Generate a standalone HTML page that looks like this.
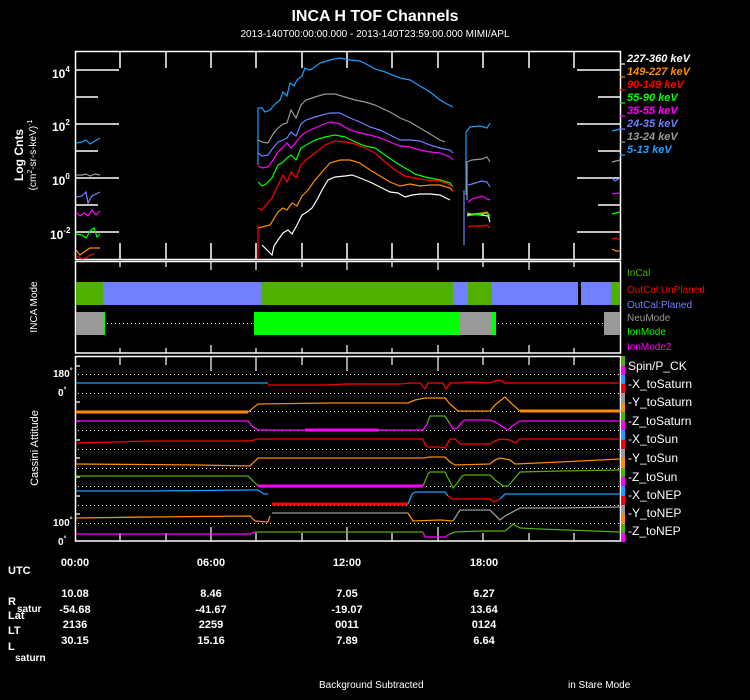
<!DOCTYPE html>
<html><head><meta charset="utf-8"><style>
html,body{margin:0;padding:0;background:#000;}
svg{display:block;font-family:"Liberation Sans",sans-serif;}
</style></head><body>
<svg width="750" height="700" viewBox="0 0 750 700" xmlns="http://www.w3.org/2000/svg">
<rect width="750" height="700" fill="#000"/>
<text x="375" y="21" fill="#fff" font-size="16" font-weight="bold" text-anchor="middle">INCA H TOF Channels</text>
<text x="375" y="37" fill="#fff" font-size="10" text-anchor="middle">2013-140T00:00:00.000 - 2013-140T23:59:00.000 MIMI/APL</text>

<!-- Panel 1 -->
<g stroke="#fff" stroke-width="1.5" fill="none">
<rect x="75.5" y="51.5" width="545" height="208"/>
<path d="M120,52v16 M166,52v16 M211,52v16 M256,52v16 M302,52v16 M347,52v16 M392,52v16 M438,52v16 M483,52v16 M529,52v16 M574,52v16
M120,259v-16 M166,259v-16 M211,259v-16 M256,259v-16 M302,259v-16 M347,259v-16 M392,259v-16 M438,259v-16 M483,259v-16 M529,259v-16 M574,259v-16
M76,70h43 M76,97h22 M76,124h43 M76,151h22 M76,178h43 M76,205h22 M76,232h43
M620,70h-43 M620,97h-22 M620,124h-43 M620,151h-22 M620,178h-43 M620,205h-22 M620,232h-43"/>
</g>
<g font-size="12" fill="#fff" font-weight="bold">
<text x="52" y="78">10<tspan font-size="8" dy="-6">4</tspan></text>
<text x="52" y="131">10<tspan font-size="8" dy="-6">2</tspan></text>
<text x="52" y="185">10<tspan font-size="8" dy="-6">0</tspan></text>
<text x="50" y="239">10<tspan font-size="8" dy="-6">-2</tspan></text>
</g>
<text transform="translate(23,155) rotate(-90)" fill="#fff" font-size="12" font-weight="bold" text-anchor="middle">Log Cnts</text>
<text transform="translate(36,155) rotate(-90)" fill="#fff" font-size="10" text-anchor="middle">(cm<tspan font-size="7" dy="-4">2</tspan><tspan dy="4">-sr-s-keV)</tspan><tspan font-size="7" dy="-4">-1</tspan></text>

<g fill="none" stroke-width="1.2">
<!-- left segments -->
<polyline stroke="#1ea0ff" points="76,143 82,142 86,140 90,144 95,141 100,138"/>
<polyline stroke="#999" points="76,175 82,175 86,174 90,176 95,174 100,175"/>
<polyline stroke="#7080ff" points="76,197 82,196 86,192 88,203 92,196 96,194 100,192"/>
<polyline stroke="#f0f" points="76,212 80,216 84,213 88,216 92,210 96,215 100,211"/>
<polyline stroke="#0f0" points="76,234 82,235 86,238 90,231 94,228 97,237 100,234"/>
<polyline stroke="#ff8c00" points="76,250 80,255 84,252 90,248 100,248"/>
<polyline stroke="#f00" points="77,256 82,259 86,258 90,255 94,254"/>
<!-- main -->
<polyline stroke="#1ea0ff" points="258,165 258,108 262,108 265,112 270,110 275,104 280,100 283,92 287,96 290,83 294,86 297,80 302,76 305,68 309,70 312,69 320,63 330,60 340,58 350,60 360,61 370,66 375,69 385,72 400,78 410,80 420,86 430,92 440,100 447,104 453,107"/>
<polyline stroke="#999" points="258,140 262,142 268,143 273,134 278,128 283,124 287,123 291,110 296,118 301,105 306,100 315,97 325,94 335,94 345,97 355,100 365,102 375,105 390,112 400,118 410,122 420,128 430,134 440,140 445,142"/>
<polyline stroke="#7080ff" points="258,153 262,156 268,155 273,148 278,142 283,140 287,138 291,132 296,136 301,124 306,120 315,117 322,115 330,113 340,113 350,118 360,122 370,127 380,130 390,135 400,140 410,140 420,141 430,145 440,148 450,150 453,153"/>
<polyline stroke="#f0f" points="258,166 262,168 268,167 273,160 278,152 283,147 287,143 291,148 296,142 301,136 306,132 315,128 322,125 330,122 340,124 350,130 360,133 370,135 380,138 390,142 400,146 410,147 420,150 430,152 440,153 450,157 453,160"/>
<polyline stroke="#0f0" points="258,182 262,186 266,184 272,178 278,165 283,162 287,158 291,155 296,160 301,148 306,145 315,140 325,137 335,135 345,137 355,142 365,146 375,148 385,155 395,162 405,168 415,174 425,177 440,180 450,183 453,187"/>
<polyline stroke="#f00" points="258,208 262,210 266,205 272,198 278,185 283,175 287,182 291,172 296,178 301,165 306,160 315,153 325,145 335,141 345,142 355,144 365,148 375,153 385,162 395,170 405,176 415,178 425,180 440,181 450,185 453,187"/>
<polyline stroke="#ff8c00" points="258,228 262,227 270,225 278,212 283,208 287,210 292,203 297,206 302,196 308,190 315,180 322,172 330,163 340,160 350,160 360,163 370,170 380,176 390,182 400,186 410,184 420,186 430,185 440,185 450,188 453,191"/>
<polyline stroke="#fff" points="262,245 267,250 272,255 274,246 278,240 283,233 288,230 292,234 297,225 302,215 307,212 312,208 318,198 322,190 328,180 335,177 345,176 352,175 360,178 370,182 380,187 390,192 398,193 405,197 412,195 420,194 430,194 440,195 450,200"/>
<polyline stroke="#f00" points="258,259 258,225"/>
<!-- right segment -->
<polyline stroke="#7080ff" points="464,245 464,190"/>
<polyline stroke="#1ea0ff" points="466,195 466,132 470,127 480,126 487,128 490,123"/>
<polyline stroke="#999" points="467,200 467,162 472,160 482,159 487,157 490,162"/>
<polyline stroke="#7080ff" points="468,185 472,184 482,181 487,182 490,187"/>
<polyline stroke="#f0f" points="468,202 472,199 482,196 487,199 490,200"/>
<polyline stroke="#fff" points="467,215 472,214 482,215 488,216 490,222"/>
<polyline stroke="#ff8c00" points="467,213 472,214 482,213 487,212 490,216"/>
<polyline stroke="#0f0" points="467,216 472,215 482,214 487,213 490,218"/>
<polyline stroke="#f00" points="468,227 472,226 482,226 487,225 490,228"/>
<!-- right edge -->
<polyline stroke="#1ea0ff" points="612,131 616,130 620,129"/>
<polyline stroke="#999" points="612,162 620,160"/>
<polyline stroke="#7080ff" points="612,178 615,181 620,178"/>
<polyline stroke="#f0f" points="612,194 620,193"/>
<polyline stroke="#0f0" points="612,214 620,212"/>
<polyline stroke="#f00" points="612,239 616,238 620,240"/>
<polyline stroke="#ff8c00" points="612,249 616,251 620,251"/>
</g>
<!-- legend 1 -->
<g font-size="11" font-weight="bold" font-style="italic">
<text x="627" y="62" fill="#fff">227-360 keV</text>
<text x="627" y="75" fill="#ff8c00">149-227 keV</text>
<text x="627" y="88" fill="#f00">90-149 keV</text>
<text x="627" y="101" fill="#0f0">55-90 keV</text>
<text x="627" y="114" fill="#f0f">35-55 keV</text>
<text x="627" y="127" fill="#7080ff">24-35 keV</text>
<text x="627" y="140" fill="#999">13-24 keV</text>
<text x="627" y="153" fill="#1ea0ff">5-13 keV</text>
</g>
<g stroke-width="1.2">
<path d="M620,64h5" stroke="#fff"/><path d="M620,77h5" stroke="#ff8c00"/><path d="M620,90h5" stroke="#f00"/><path d="M620,103h5" stroke="#0f0"/><path d="M620,116h5" stroke="#f0f"/><path d="M620,129h5" stroke="#7080ff"/><path d="M620,142h5" stroke="#999"/><path d="M620,155h5" stroke="#1ea0ff"/>
</g>

<!-- Panel 2 -->
<rect x="75.5" y="261.5" width="545" height="91.5" fill="none" stroke="#fff" stroke-width="1.5"/>
<path d="M120,262v5 M166,262v5 M211,262v8 M256,262v8 M302,262v5 M347,262v8 M392,262v5 M438,262v8 M483,262v5 M529,262v8 M574,262v5 M120,353v-5 M166,353v-5 M211,353v-8 M256,353v-5 M302,353v-5 M347,353v-8 M392,353v-5 M438,353v-8 M483,353v-5 M529,353v-8 M574,353v-5" stroke="#fff" stroke-width="1.2"/>
<g>
<rect x="76" y="282" width="28" height="23" fill="#50b000"/>
<rect x="103" y="282" width="158" height="23" fill="#7080ff"/>
<rect x="261" y="282" width="192" height="23" fill="#50b000"/>
<rect x="453" y="282" width="15" height="23" fill="#7080ff"/>
<rect x="468" y="282" width="24" height="23" fill="#50b000"/>
<rect x="492" y="282" width="86" height="23" fill="#7080ff"/>
<rect x="581" y="282" width="31" height="23" fill="#7080ff"/>
<rect x="611" y="282" width="9" height="23" fill="#50b000"/>
<rect x="76" y="312" width="27" height="23" fill="#999"/>
<rect x="103" y="312" width="2" height="23" fill="#0f0"/>
<rect x="254" y="312" width="203" height="23" fill="#0f0"/>
<rect x="457" y="312" width="3" height="23" fill="#0f0"/>
<rect x="460" y="312" width="32" height="23" fill="#999"/>
<rect x="492" y="312" width="4" height="23" fill="#0f0"/>
<rect x="604" y="312" width="16" height="23" fill="#999"/>
<path d="M107,323.5H253 M498,323.5H603" stroke="#fff" stroke-width="1" stroke-dasharray="1,3"/>
</g>
<text transform="translate(37,307) rotate(-90)" fill="#fff" font-size="10" text-anchor="middle">INCA Mode</text>
<g font-size="10">
<text x="627" y="276" fill="#50b000">InCal</text>
<text x="627" y="293" fill="#f00">OutCal:UnPlaned</text>
<text x="627" y="308" fill="#7080ff">OutCal:Planed</text>
<text x="627" y="321" fill="#999">NeuMode</text>
<text x="627" y="335" fill="#0f0">IonMode</text>
<text x="627" y="350" fill="#f0f">IonMode2</text>
</g>

<!-- Panel 3 -->
<rect x="75.5" y="356.5" width="545" height="184.5" fill="none" stroke="#fff" stroke-width="1.5"/>
<path d="M120,357v8 M166,357v8 M211,357v14 M256,357v14 M302,357v8 M347,357v14 M392,357v8 M438,357v14 M483,357v8 M529,357v8 M574,357v8 M120,541v-8 M166,541v-8 M211,541v-14 M256,541v-8 M302,541v-8 M347,541v-14 M392,541v-8 M438,541v-14 M483,541v-8 M529,541v-8 M574,541v-8
M76,366h4 M76,402h4 M76,421h4 M76,440h4 M76,458h4 M76,477h4 M76,496h4 M76,514h4" stroke="#fff" stroke-width="1.2"/>
<path d="M78,374.5H620 M78,393.5H620 M78,411.5H620 M78,430.5H620 M78,449.5H620 M78,468.5H620 M78,486.5H620 M78,505.5H620 M78,523.5H620" stroke="#fff" stroke-width="1" stroke-dasharray="1,3"/>
<g font-size="10" fill="#fff" font-weight="bold">
<text x="53" y="377">180<tspan font-size="7" dy="-4">°</tspan></text>
<text x="58" y="396">0<tspan font-size="7" dy="-4">°</tspan></text>
<text x="53" y="526">100<tspan font-size="7" dy="-4">°</tspan></text>
<text x="58" y="545">0<tspan font-size="7" dy="-4">°</tspan></text>
</g>
<text transform="translate(38,448) rotate(-90)" fill="#fff" font-size="11" text-anchor="middle">Cassini Attitude</text>
<g fill="none" stroke-width="1.3">
<polyline stroke="#1ea0ff" points="76,383 250,383 258,383 268,383"/>
<polyline stroke="#f00" points="268,385 325,385 345,384 400,384 410,383 420,383 425,389 428,383 443,383 446,389 450,383 460,383 470,382 490,383 495,381 500,380 505,383 620,383"/>
<polyline stroke="#ff8c00" stroke-width="3" points="76,412 248,412"/>
<polyline stroke="#ff8c00" points="248,412 258,404 330,403 408,403 415,400 425,398 445,398 450,404 458,411 490,411 495,405 505,397 512,404 520,411"/>
<polyline stroke="#ff8c00" stroke-width="3" points="520,411 620,411"/>
<polyline stroke="#f0f" points="76,421 248,421 252,426 258,430 300,430 423,430 427,424"/>
<polyline stroke="#f0f" stroke-width="3" points="305,430 378,430"/>
<polyline stroke="#50b000" points="427,424 430,416 445,416 450,424"/>
<polyline stroke="#f0f" points="450,424 453,429 457,428 462,422 465,420 490,420 495,422 503,427 508,430 512,426 520,421 620,421"/>
<polyline stroke="#f00" points="76,443 150,441 250,441 258,439 320,439 423,439 425,445 428,447 440,447 445,448 450,439 455,439 460,444 490,444 495,441 500,439 510,440 515,443 520,439 620,439"/>
<polyline stroke="#ff8c00" points="76,464 200,465 250,466 258,458 330,458 423,458 430,457 445,457 450,462 455,465 490,464 495,460 500,458 510,460 515,464 560,462 620,459"/>
<polyline stroke="#50b000" points="76,476 248,476 252,480 258,486"/>
<polyline stroke="#f0f" stroke-width="3" points="258,486 423,486"/>
<polyline stroke="#50b000" points="423,486 428,474 430,472 445,472 450,482 453,488 458,482 462,476 465,475 490,475 495,480 503,486 508,486 515,478 520,472 560,471 620,470"/>
<polyline stroke="#1ea0ff" points="76,491 150,491 250,490 258,490 264,494 268,494"/>
<polyline stroke="#f00" stroke-width="3" points="272,504 408,504"/>
<polyline stroke="#1ea0ff" points="408,504 412,494 415,492 445,492 448,496"/>
<polyline stroke="#f00" points="448,496 452,499 490,499 494,502 500,499"/>
<polyline stroke="#1ea0ff" points="500,499 505,494 520,494 620,494"/>
<polyline stroke="#ff8c00" points="76,518 150,517 250,516 255,521 268,522 270,516"/>
<polyline stroke="#999" points="272,513 408,513"/>
<polyline stroke="#ff8c00" points="408,513 413,521 440,520 453,521"/>
<polyline stroke="#999" points="453,521 460,510 490,510 495,515 500,520 505,516 520,508 560,508 620,507"/>
<polyline stroke="#f0f" points="76,534 250,534 255,532"/>
<polyline stroke="#50b000" points="255,532 423,532"/>
<polyline stroke="#f0f" points="423,532 425,537 445,537 450,534"/>
<polyline stroke="#50b000" points="450,534 455,532 480,531 505,531 510,527 513,524 520,528 540,529 620,532"/>
</g>
<!-- color bar -->
<g>
<rect x="621" y="356" width="4" height="10" fill="#50b000"/>
<rect x="621" y="366" width="4" height="9" fill="#f0f"/>
<rect x="621" y="375" width="4" height="9" fill="#1ea0ff"/>
<rect x="621" y="384" width="4" height="9" fill="#f00"/>
<rect x="621" y="393" width="4" height="10" fill="#999"/>
<rect x="621" y="403" width="4" height="9" fill="#ff8c00"/>
<rect x="621" y="412" width="4" height="9" fill="#50b000"/>
<rect x="621" y="421" width="4" height="9" fill="#f0f"/>
<rect x="621" y="430" width="4" height="10" fill="#1ea0ff"/>
<rect x="621" y="440" width="4" height="9" fill="#f00"/>
<rect x="621" y="449" width="4" height="9" fill="#999"/>
<rect x="621" y="458" width="4" height="10" fill="#ff8c00"/>
<rect x="621" y="468" width="4" height="9" fill="#50b000"/>
<rect x="621" y="477" width="4" height="9" fill="#f0f"/>
<rect x="621" y="486" width="4" height="10" fill="#1ea0ff"/>
<rect x="621" y="496" width="4" height="9" fill="#f00"/>
<rect x="621" y="505" width="4" height="9" fill="#999"/>
<rect x="621" y="514" width="4" height="10" fill="#ff8c00"/>
<rect x="621" y="524" width="4" height="9" fill="#50b000"/>
<rect x="621" y="533" width="4" height="9" fill="#f0f"/>
</g>
<g font-size="12" fill="#fff">
<text x="628" y="370">Spin/P_CK</text>
<text x="628" y="388">-X_toSaturn</text>
<text x="628" y="406">-Y_toSaturn</text>
<text x="628" y="425">-Z_toSaturn</text>
<text x="628" y="443">-X_toSun</text>
<text x="628" y="462">-Y_toSun</text>
<text x="628" y="481">-Z_toSun</text>
<text x="628" y="499">-X_toNEP</text>
<text x="628" y="517">-Y_toNEP</text>
<text x="628" y="535">-Z_toNEP</text>
</g>

<!-- bottom table -->
<g font-size="11" fill="#fff" font-weight="bold">
<text x="8" y="574">UTC</text>
<text x="8" y="605">R</text><text x="17" y="612" font-size="10">satur</text>
<text x="8" y="619">Lat</text>
<text x="8" y="634">LT</text>
<text x="8" y="650">L</text><text x="15" y="661" font-size="10">saturn</text>
</g>
<g font-size="11" fill="#fff" text-anchor="middle" font-weight="bold">
<text x="75" y="566">00:00</text><text x="211" y="566">06:00</text><text x="347" y="566">12:00</text><text x="484" y="566">18:00</text>
<text x="75" y="597">10.08</text><text x="211" y="597">8.46</text><text x="347" y="597">7.05</text><text x="484" y="597">6.27</text>
<text x="75" y="613">-54.68</text><text x="211" y="613">-41.67</text><text x="347" y="613">-19.07</text><text x="484" y="613">13.64</text>
<text x="75" y="628">2136</text><text x="211" y="628">2259</text><text x="347" y="628">0011</text><text x="484" y="628">0124</text>
<text x="75" y="644">30.15</text><text x="211" y="644">15.16</text><text x="347" y="644">7.89</text><text x="484" y="644">6.64</text>
</g>
<text x="319" y="688" fill="#fff" font-size="10">Background Subtracted</text>
<text x="568" y="688" fill="#fff" font-size="10">in Stare Mode</text>
</svg>
</body></html>
